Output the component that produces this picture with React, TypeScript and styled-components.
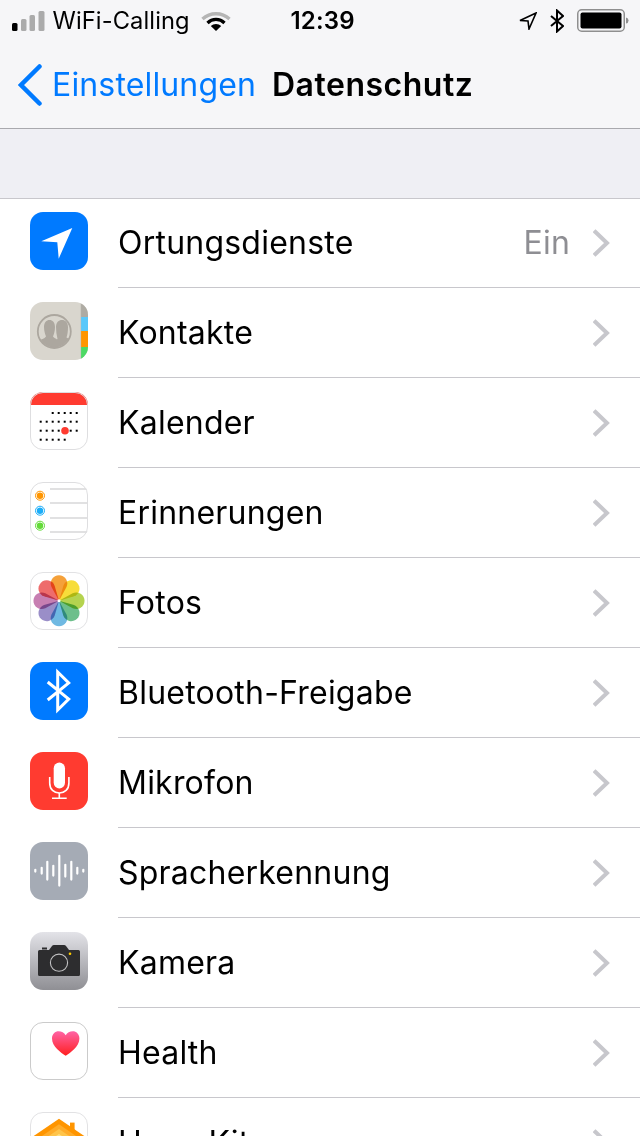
import React from "react";
import styled, { createGlobalStyle } from "styled-components";

const Global = createGlobalStyle`
  html, body { margin: 0; padding: 0; background: #fff; }
  body { font-family: Inter, "Liberation Sans", sans-serif; }
`;

const Page = styled.div`
  width: 640px;
  height: 1136px;
  overflow: hidden;
  background: #fff;
  display: flex;
  flex-direction: column;
`;

const TopBar = styled.header`
  background: #f6f6f8;
  height: 128px;
  border-bottom: 1px solid #a9a9ae;
  box-sizing: content-box;
  display: flex;
  flex-direction: column;
  flex: none;
`;

const StatusBar = styled.div`
  height: 41px;
  display: flex;
  align-items: center;
  padding-left: 12px;
  color: #000;
`;

const Carrier = styled.span`
  font-size: 23.7px;
  line-height: 41px;
  margin-left: 7.5px;
  width: 148px;
  letter-spacing: 0.1px;
  white-space: nowrap;
`;

const Clock = styled.span`
  font-size: 24px;
  font-weight: 600;
  line-height: 41px;
  margin-left: 60px;
  width: 65px;
  letter-spacing: 0.2px;
  white-space: nowrap;
`;

const StatusRight = styled.div`
  margin-left: auto;
  margin-right: 11px;
  display: flex;
  align-items: center;
  gap: 13px;
`;

const NavBar = styled.nav`
  height: 87px;
  display: flex;
  align-items: center;
  padding-left: 18px;
`;

const BackLabel = styled.span`
  font-size: 32px;
  color: #007aff;
  margin-left: 10px;
  width: 220px;
  letter-spacing: 0.15px;
  white-space: nowrap;
`;

const Title = styled.h1`
  margin: 0;
  font-size: 32px;
  font-weight: 600;
  letter-spacing: 0.5px;
  color: #000;
  white-space: nowrap;
`;

const SectionGap = styled.div`
  height: 69px;
  background: #efeff4;
  border-bottom: 1px solid #c8c7cc;
  flex: none;
`;

const List = styled.ul`
  list-style: none;
  margin: -1px 0 0;
  padding: 0;
  flex: none;
`;

const Row = styled.li`
  height: 90px;
  padding-left: 30px;
  display: flex;
  align-items: center;
  box-sizing: border-box;
  flex: none;
`;

const IconSlot = styled.div`
  width: 58px;
  height: 58px;
  flex: none;
  margin-top: -4px;
  svg { display: block; }
`;

const RowBody = styled.div`
  flex: 1;
  align-self: stretch;
  margin-left: 30px;
  padding-right: 29px;
  border-bottom: 1px solid #c8c7cc;
  display: flex;
  align-items: center;
`;

const Label = styled.span`
  font-size: 32px;
  letter-spacing: 0.22px;
  color: #000;
  flex: 1;
  white-space: nowrap;
`;

const Value = styled.span`
  font-size: 32px;
  color: #8e8e93;
  letter-spacing: 0.2px;
  margin-right: 23px;
`;

const Squircle: React.FC<{ bg: string; border?: string; children?: React.ReactNode }> = ({ bg, border, children }) => (
  <svg width="58" height="58" viewBox="0 0 58 58">
    <defs>
      <clipPath id="sq"><rect width="58" height="58" rx="13" /></clipPath>
      <clipPath id="ringClip"><circle cx="24.3" cy="29.5" r="16" /></clipPath>
    </defs>
    <g clipPath="url(#sq)">
      <rect width="58" height="58" fill={bg} />
      {children}
    </g>
    {border && <rect x="0.5" y="0.5" width="57" height="57" rx="12.5" fill="none" stroke={border} />}
  </svg>
);

const Chevron = () => (
  <svg width="18" height="28" viewBox="0 0 18 28">
    <path d="M2.5 3 L14 14 L2.5 25" fill="none" stroke="#c7c7cc" strokeWidth="4" strokeLinecap="square" />
  </svg>
);

const LocationIcon = () => (
  <Squircle bg="#007aff">
    <path d="M42.3 16 L11.3 29.3 L27.3 30.3 L28.7 46.7 Z" fill="#fff" />
  </Squircle>
);

const ContactsIcon = () => (
  <Squircle bg="#d9d6ce">
    <rect x="51" y="0" width="7" height="15" fill="#aeaba3" />
    <rect x="51" y="15" width="7" height="14" fill="#5ac8fa" />
    <rect x="51" y="29" width="7" height="16" fill="#ff9500" />
    <rect x="51" y="45" width="7" height="13" fill="#4cd964" />
    <rect x="50.5" y="0" width="0.6" height="58" fill="#c4c1b9" />
    <g clipPath="url(#ringClip)">
      <path d="M5 48 V40 C9 37.5 14 37.5 16 34.5 C15 32 14 29 14 25 C14 20.5 16.5 18 19.5 18 C22.5 18 25 20.5 25 25 C25 29 24 32 23 34.5 C24 36 26 36.5 27 37.5 L21 48 Z" fill="#aca79f" />
      <path d="M20 50 C20.5 42 24 39.5 27.5 37 C26.5 33 26 29 26 25 C26 20.5 28.7 18 32 18 C35.3 18 38 20.5 38 25 C38 29 37.5 33 36.5 35.5 C38 36.5 41 37 44 39 V50 Z" fill="#aca79f" />
    </g>
    <circle cx="24.3" cy="29.5" r="16.5" fill="none" stroke="#aca79f" strokeWidth="1.8" />
  </Squircle>
);

const calendarDots: [number, number][] = [
  ...[22.7, 28.7, 34.7, 40.7, 46.7].map((x) => [x, 21] as [number, number]),
  ...[10.7, 16.7, 22.7, 28.7, 34.7, 40.7, 46.7].map((x) => [x, 29.7] as [number, number]),
  ...[10.7, 16.7, 22.7, 28.7, 40.7, 46.7].map((x) => [x, 38.7] as [number, number]),
  ...[10.7, 16.7, 22.7, 28.7, 34.7].map((x) => [x, 47.7] as [number, number]),
];

const CalendarIcon = () => (
  <Squircle bg="#fff" border="#dedee0">
    <rect width="58" height="13" fill="#ff3b30" />
    {calendarDots.map(([x, y]) => (
      <rect key={`${x}-${y}`} x={x - 1} y={y - 1} width="2" height="2" fill="#000" />
    ))}
    <circle cx="35" cy="38.7" r="3.8" fill="#ff3b30" />
  </Squircle>
);

const RemindersIcon = () => (
  <Squircle bg="#fff" border="#dedee0">
    {[7, 21, 36, 50].map((y) => (
      <rect key={y} x="20" y={y - 0.5} width="38" height="1" fill="#c4c4c6" />
    ))}
    {[
      [13.7, "#ff9500"],
      [28.7, "#1badf8"],
      [43.7, "#63da38"],
    ].map(([y, c]) => (
      <g key={String(c)}>
        <circle cx="10" cy={Number(y)} r="4.5" fill="none" stroke={String(c)} strokeWidth="1" />
        <circle cx="10" cy={Number(y)} r="3.2" fill={String(c)} />
      </g>
    ))}
  </Squircle>
);

const petals = ["#f5a13a", "#f7dd3a", "#b5d34f", "#6dbf8b", "#6fb9e2", "#9a8ec8", "#c77fb2", "#ee6c6c"];

const PhotosIcon = () => (
  <Squircle bg="#fff" border="#e2e2e4">
    <g style={{ isolation: "isolate" }}>
      {petals.map((c, i) => (
        <g key={c} transform={`rotate(${i * 45} 29 28.7)`}>
          <path
            d="M29 28.7 L21.5 15 A8.3 8.3 0 1 1 36.5 15 Z"
            fill={c}
            style={{ mixBlendMode: "multiply" }}
          />
        </g>
      ))}
    </g>
    <circle cx="29" cy="28.7" r="1.5" fill="#fff" />
  </Squircle>
);

const BluetoothIcon = () => (
  <Squircle bg="#007aff">
    <path d="M17.7 20 L38.7 37 L27.7 48 V10 L38.7 21 L17.7 38" fill="none" stroke="#fff" strokeWidth="3" />
  </Squircle>
);

const MicIcon = () => (
  <Squircle bg="#ff3b30">
    <rect x="23.7" y="10.5" width="11.3" height="26" rx="5.65" fill="#fff" />
    <path d="M19.7 25 V31 C19.7 37.5 24 41 29.3 41 C34.6 41 38.9 37.5 38.9 31 V25" fill="none" stroke="#fff" strokeWidth="1.6" />
    <path d="M29.3 41 V46 M22 46.2 H36.7" fill="none" stroke="#fff" strokeWidth="1.6" />
  </Squircle>
);

const siriBars: [number, number][] = [
  [5.3, 2], [11.7, 4], [17.3, 10], [23.3, 6], [29.3, 16], [35.3, 7], [41.3, 10], [47.3, 4], [53.3, 2],
];

const SiriIcon = () => (
  <Squircle bg="#a5abb5">
    {siriBars.map(([x, h]) => (
      <rect key={x} x={x - 1.1} y={28.7 - h} width="2.2" height={h * 2} rx="1.1" fill="#fff" />
    ))}
  </Squircle>
);

const CameraIcon = () => (
  <svg width="58" height="58" viewBox="0 0 58 58">
    <defs>
      <linearGradient id="camG" x1="0" y1="0" x2="0" y2="1">
        <stop offset="0" stopColor="#e3e3e8" />
        <stop offset="1" stopColor="#8f8f94" />
      </linearGradient>
    </defs>
    <rect width="58" height="58" rx="13" fill="url(#camG)" />
    <path d="M9.5 18 H19 L22 14 Q22.6 13 24 13 H34 Q35.4 13 36 14 L39 18 H48.5 Q50 18 50 19.5 V42.5 Q50 44 48.5 44 H9.5 Q8 44 8 42.5 V19.5 Q8 18 9.5 18 Z" fill="#2d2d2f" />
    <rect x="12" y="15.5" width="5" height="2" fill="#2d2d2f" />
    <circle cx="29" cy="30.7" r="8.6" fill="#2d2d2f" stroke="#c2c2c4" strokeWidth="1.1" />
    <circle cx="40" cy="21.7" r="1.3" fill="#ffcc00" />
  </svg>
);

const HealthIcon = () => (
  <svg width="58" height="58" viewBox="0 0 58 58">
    <defs>
      <linearGradient id="hG" x1="0" y1="0" x2="0" y2="1">
        <stop offset="0" stopColor="#ff63a5" />
        <stop offset="1" stopColor="#ff1f1f" />
      </linearGradient>
    </defs>
    <rect x="0.5" y="0.5" width="57" height="57" rx="12.5" fill="#fff" stroke="#cbcbcb" />
    <path d="M35.7 33.8 C31 30.5 22 25 22 16.5 C22 12 25.2 9.3 28.6 9.3 C31.6 9.3 34.2 10.8 35.7 13.2 C37.2 10.8 39.8 9.3 42.8 9.3 C46.2 9.3 49.4 12 49.4 16.5 C49.4 25 40.4 30.5 35.7 33.8 Z" fill="url(#hG)" />
  </svg>
);

const HomeIcon = () => (
  <Squircle bg="#fff" border="#e2e2e4">
    <rect x="40" y="10.6" width="4.6" height="14" fill="#ff9500" />
    <path d="M29 6.7 L60 27.9 V58 H-2 V27.9 Z" fill="#ff9500" />
    <path d="M29 12.3 L60 33.5 V58 H-2 V33.5 Z" fill="#ffac2a" />
    <path d="M29 17 L60 38.2 V58 H-2 V38.2 Z" fill="#ffc44a" />
    <path d="M29 22 L60 43.2 V58 H-2 V43.2 Z" fill="#ffdf80" />
  </Squircle>
);

const rows: { label: string; icon: React.ReactNode; value?: string }[] = [
  { label: "Ortungsdienste", icon: <LocationIcon />, value: "Ein" },
  { label: "Kontakte", icon: <ContactsIcon /> },
  { label: "Kalender", icon: <CalendarIcon /> },
  { label: "Erinnerungen", icon: <RemindersIcon /> },
  { label: "Fotos", icon: <PhotosIcon /> },
  { label: "Bluetooth-Freigabe", icon: <BluetoothIcon /> },
  { label: "Mikrofon", icon: <MicIcon /> },
  { label: "Spracherkennung", icon: <SiriIcon /> },
  { label: "Kamera", icon: <CameraIcon /> },
  { label: "Health", icon: <HealthIcon /> },
  { label: "HomeKit", icon: <HomeIcon /> },
];

export default function App() {
  return (
    <>
      <Global />
      <Page>
        <TopBar>
          <StatusBar>
            <svg width="33" height="20" viewBox="0 0 33 20">
              <rect x="0" y="12" width="5.5" height="8" rx="1.5" fill="#000" />
              <rect x="9" y="8" width="5.5" height="12" rx="1.5" fill="#ababab" />
              <rect x="17.5" y="4" width="5.5" height="16" rx="1.5" fill="#ababab" />
              <rect x="26.5" y="0" width="6" height="20" rx="1.5" fill="#ababab" />
            </svg>
            <Carrier>WiFi-Calling</Carrier>
            <svg width="30" height="20" viewBox="0 0 30 20">
              <path d="M1.5 8 A20 20 0 0 1 28.5 8" fill="none" stroke="#b5b5b5" strokeWidth="3.4" />
              <path d="M6.5 12 A12 12 0 0 1 23.5 12" fill="none" stroke="#000" strokeWidth="3.2" />
              <path d="M15 20 L9.8 15 A7.5 7.5 0 0 1 20.2 15 Z" fill="#000" />
            </svg>
            <Clock>12:39</Clock>
            <StatusRight>
              <svg width="18" height="18" viewBox="0 0 18 18">
                <path d="M17 1 L1 8.5 L9 9 L10 17 Z" fill="none" stroke="#000" strokeWidth="1.6" strokeLinejoin="miter" />
              </svg>
              <svg width="14" height="24" viewBox="0 0 14 24">
                <path d="M1 7 L13 17 L7 22.5 V1.5 L13 7 L1 17" fill="none" stroke="#000" strokeWidth="2" />
              </svg>
              <svg width="52" height="24" viewBox="0 0 52 24">
                <rect x="0.75" y="0.75" width="46.5" height="21.5" rx="4" fill="none" stroke="#8f8f8f" strokeWidth="1.5" />
                <rect x="3.5" y="3.5" width="41" height="16" rx="2" fill="#000" />
                <path d="M49 8.5 Q51.5 9 51.5 11.5 Q51.5 14 49 14.5 Z" fill="#8f8f8f" />
              </svg>
            </StatusRight>
          </StatusBar>
          <NavBar>
            <svg width="24" height="42" viewBox="0 0 24 42">
              <path d="M21.5 2.5 L3 21 L21.5 39.5" fill="none" stroke="#007aff" strokeWidth="4.5" strokeLinecap="round" strokeLinejoin="miter" />
            </svg>
            <BackLabel>Einstellungen</BackLabel>
            <Title>Datenschutz</Title>
          </NavBar>
        </TopBar>
        <SectionGap />
        <List>
          {rows.map((r) => (
            <Row key={r.label}>
              <IconSlot>{r.icon}</IconSlot>
              <RowBody>
                <Label>{r.label}</Label>
                {r.value && <Value>{r.value}</Value>}
                <Chevron />
              </RowBody>
            </Row>
          ))}
        </List>
      </Page>
    </>
  );
}
